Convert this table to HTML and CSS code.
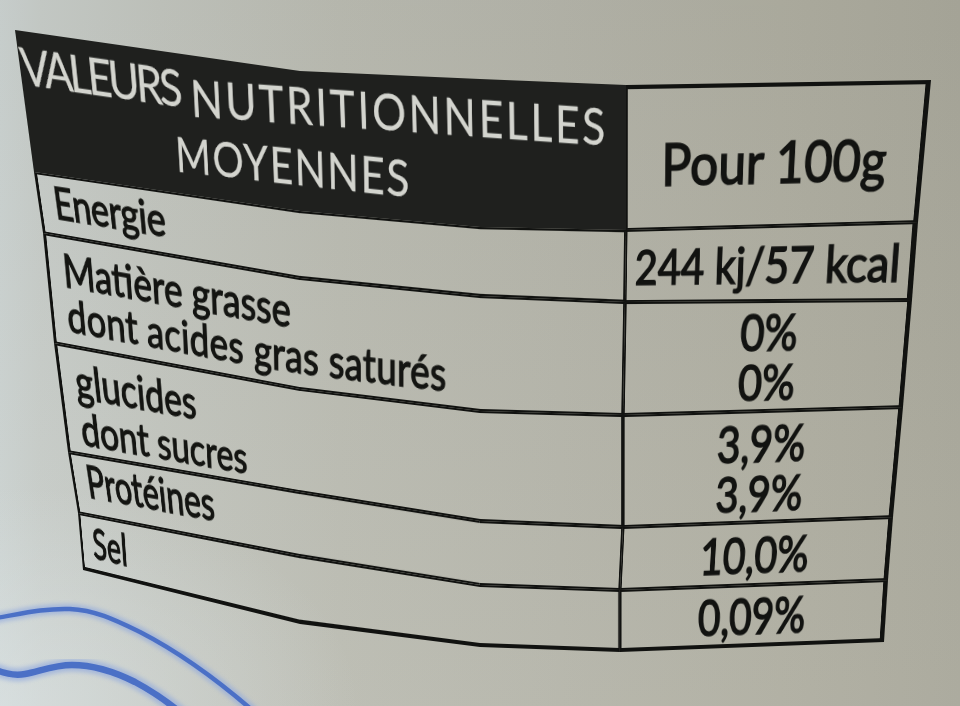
FILE: index.html
```html
<!DOCTYPE html>
<html lang="fr">
<head>
<meta charset="utf-8">
<title>Valeurs nutritionnelles moyennes</title>
<link rel="stylesheet" href="styles.css">
</head>
<body>
<main class="cup">
  <svg class="waves" viewBox="0 0 320 146" aria-hidden="true">
    <defs>
      <filter id="soft" x="-10%" y="-10%" width="120%" height="120%"><feGaussianBlur stdDeviation="2.2"/></filter>
      <filter id="softer" x="-10%" y="-10%" width="120%" height="120%"><feGaussianBlur stdDeviation="0.7"/></filter>
    </defs>
    <g fill="none" stroke-linecap="round">
      <path class="halo" filter="url(#soft)" d="M -4 58 C 20 54, 45 48, 70 49 C 95 50, 115 60, 140 72 C 175 90, 215 118, 252 150"/>
      <path class="halo thick" filter="url(#soft)" d="M -4 110 C 6 114, 14 116, 25 114 C 40 111, 55 105, 72 105 C 95 105, 115 112, 135 122 C 152 131, 168 142, 185 156"/>
      <path class="core" filter="url(#softer)" d="M -4 58 C 20 54, 45 48, 70 49 C 95 50, 115 60, 140 72 C 175 90, 215 118, 252 150"/>
      <path class="core thick" filter="url(#softer)" d="M -4 110 C 6 114, 14 116, 25 114 C 40 111, 55 105, 72 105 C 95 105, 115 112, 135 122 C 152 131, 168 142, 185 156"/>
    </g>
  </svg>

  <div class="label">
    <div class="names">
      <div class="seg dark r0 c0" data-cell="0 0"></div>
      <div class="seg dark r0 c1" data-cell="0 1"></div>
      <div class="seg dark r0 c2" data-cell="0 2"></div>
      <div class="seg r1 c0" data-cell="1 0"></div>
      <div class="seg r1 c1" data-cell="1 1"></div>
      <div class="seg r1 c2" data-cell="1 2"></div>
      <div class="seg r2 c0" data-cell="2 0"></div>
      <div class="seg r2 c1" data-cell="2 1"></div>
      <div class="seg r2 c2" data-cell="2 2"></div>
      <div class="seg r3 c0" data-cell="3 0"></div>
      <div class="seg r3 c1" data-cell="3 1"></div>
      <div class="seg r3 c2" data-cell="3 2"></div>
      <div class="seg r4 c0" data-cell="4 0"></div>
      <div class="seg r4 c1" data-cell="4 1"></div>
      <div class="seg r4 c2" data-cell="4 2"></div>
      <div class="seg r5 c0" data-cell="5 0"></div>
      <div class="seg r5 c1" data-cell="5 1"></div>
      <div class="seg r5 c2" data-cell="5 2"></div>

      <div class="txt title r0" data-row="0">
        <p class="first"><span class="w tight">VALEURS</span> <span class="w wide">NUTRITIONNELLES</span></p>
        <p class="second"><span class="w">MOYENNES</span></p>
      </div>
      <div class="txt energy r1" data-row="1">
        <p><span class="w">Energie</span></p>
      </div>
      <div class="txt fat r2" data-row="2">
        <p><span class="w">Matière</span> <span class="w">grasse</span></p>
        <p class="spread"><span class="w">dont</span> <span class="w">acides</span> <span class="w">gras</span> <span class="w">saturés</span></p>
      </div>
      <div class="txt carb r3" data-row="3">
        <p><span class="w">glucides</span></p>
        <p><span class="w">dont</span> <span class="w">sucres</span></p>
      </div>
      <div class="txt prot r4" data-row="4">
        <p><span class="w">Protéines</span></p>
      </div>
      <div class="txt salt r5" data-row="5">
        <p><span class="w">Sel</span></p>
      </div>
    </div>

    <div class="values">
      <div class="val v0" data-cell="0 3">Pour 100g</div>
      <div class="val v1" data-cell="1 3">244 kj/57 kcal</div>
      <div class="val v2" data-cell="2 3">0%<br>0%</div>
      <div class="val v3" data-cell="3 3">3,9%<br>3,9%</div>
      <div class="val v4" data-cell="4 3">10,0%</div>
      <div class="val v5" data-cell="5 3">0,09%</div>
    </div>
  </div>
</main>
<script src="script.js"></script>
</body>
</html>
```

FILE: styles.css
```css
* {
  box-sizing: border-box;
  margin: 0;
  padding: 0;
}

html,
body {
  width: 960px;
  height: 706px;
  overflow: hidden;
}

body {
  font-family: Lato, "Open Sans", "DejaVu Sans", sans-serif;
  color: #141512;
  background: #b9b9ae;
}

.cup {
  position: relative;
  width: 960px;
  height: 706px;
  overflow: hidden;
  background:
    radial-gradient(ellipse 360px 220px at 0% 100%, rgba(222, 230, 232, 0.55), rgba(222, 230, 232, 0) 100%),
    linear-gradient(180deg, rgba(0, 0, 0, 0.03), rgba(255, 255, 255, 0.04)),
    linear-gradient(90deg, #ccd3d1 0px, #c8cdc9 40px, #c2c5be 160px, #bbbcb2 340px, #b5b5aa 560px, #afaea1 780px, #a9a89b 960px);
}

.waves {
  position: absolute;
  left: 0;
  top: 560px;
  width: 320px;
  height: 146px;
}

.waves .halo {
  stroke: #8fa8de;
  stroke-width: 10;
  opacity: 0.65;
}

.waves .halo.thick {
  stroke-width: 13;
}

.waves .core {
  stroke: #4c70c6;
  stroke-width: 4.5;
}

.waves .core.thick {
  stroke-width: 6.5;
}

.label {
  display: flex;
  align-items: flex-start;
  filter: blur(0.35px);
}

/* left part of the table: frame segments + text layer */
.names {
  display: grid;
  flex: none;
  grid-template-columns: 330px 225px 160px;
  grid-template-rows: 142px 63px 111px 108px 62px 62px;
}

.r0 { grid-row: 1; }
.r1 { grid-row: 2; }
.r2 { grid-row: 3; }
.r3 { grid-row: 4; }
.r4 { grid-row: 5; }
.r5 { grid-row: 6; }
.c0 { grid-column: 1; }
.c1 { grid-column: 2; }
.c2 { grid-column: 3; }

.seg {
  border: 0 solid #111210;
  border-width: 2.4px 0;
  transform-origin: 0 0;
}

.seg.c0 {
  border-left-width: 4.5px;
}

.seg.c2 {
  border-right-width: 2.6px;
}

.seg.r5 {
  border-bottom-width: 4.5px;
}

.seg.dark {
  border-width: 0;
  background: #1f201e;
}

.txt {
  grid-column: 1 / -1;
  font-size: 46px;
  font-weight: 400;
  line-height: 46px;
  padding-left: 22px;
  white-space: nowrap;
  -webkit-text-stroke: 1.3px #141512;
}

.w {
  display: inline-block;
  transform-origin: 0 0;
}

.title {
  color: #d3d4ce;
  font-size: 50px;
  line-height: 59px;
  text-align: left;
  padding: 4px 0 0 1px;
  -webkit-text-stroke: 0.3px #d3d4ce;
}

.title .tight {
  letter-spacing: -4px;
  vertical-align: 8px;
}

.title .wide {
  letter-spacing: 3.2px;
}

.title .second {
  padding-left: 178px;
  letter-spacing: 2px;
}

.energy { padding-top: 5px; letter-spacing: -0.5px; }
.fat { padding-top: 10px; }
.fat .spread { letter-spacing: 0.4px; }
.carb { padding-top: 9px; line-height: 48px; }
.prot { padding-top: 3px; }
.salt { padding-top: 6px; }

/* right part of the table: values */
.values {
  display: flex;
  flex: none;
  flex-direction: column;
  width: 350px;
}

.val {
  display: flex;
  align-items: center;
  justify-content: center;
  text-align: center;
  white-space: nowrap;
  border: 0 solid #111210;
  border-width: 2.4px 6px 2.4px 2.6px;
  transform-origin: 0 0;
  font-size: 51px;
  font-weight: 400;
  line-height: 50px;
  color: #121311;
  -webkit-text-stroke: 1.6px #121311;
}

.v0 {
  height: 143px;
  border-top-width: 4.5px;
  font-size: 58px;
  padding-top: 8px;
}

.v1 {
  height: 75px;
}

.v2 { height: 110px; }
.v3 { height: 111px; }
.v4 { height: 63px; }

.v5 {
  height: 62px;
  border-bottom-width: 4.5px;
}
```

FILE: script.js
```js
(function () {
  // Measured corner points of the printed table on the photographed cup,
  // column by column (left border, two virtual splits, divider, right border),
  // one point per horizontal rule (top to bottom).
  var P = [
    [[15, 30], [34, 172], [43, 233], [54, 343], [68, 452], [78, 513], [83, 570]],
    [[300, 71], [300, 211], [300, 278], [300, 389], [300, 492], [300, 556], [300, 624]],
    [[480, 79], [480, 227], [480, 296], [480, 411], [480, 521], [480, 585], [480, 647]],
    [[626, 85], [626, 230], [625, 302], [623, 415], [623, 527], [620, 590], [620, 652]],
    [[931, 80], [918, 222], [912, 300], [903, 407], [893, 517], [888, 580], [884, 642]]
  ];

  function adj(m) {
    return [
      m[4] * m[8] - m[5] * m[7], m[2] * m[7] - m[1] * m[8], m[1] * m[5] - m[2] * m[4],
      m[5] * m[6] - m[3] * m[8], m[0] * m[8] - m[2] * m[6], m[2] * m[3] - m[0] * m[5],
      m[3] * m[7] - m[4] * m[6], m[1] * m[6] - m[0] * m[7], m[0] * m[4] - m[1] * m[3]
    ];
  }
  function multmm(a, b) {
    var c = [];
    for (var i = 0; i < 3; i++) {
      for (var j = 0; j < 3; j++) {
        var s = 0;
        for (var k = 0; k < 3; k++) s += a[3 * i + k] * b[3 * k + j];
        c[3 * i + j] = s;
      }
    }
    return c;
  }
  function multmv(m, v) {
    return [
      m[0] * v[0] + m[1] * v[1] + m[2] * v[2],
      m[3] * v[0] + m[4] * v[1] + m[5] * v[2],
      m[6] * v[0] + m[7] * v[1] + m[8] * v[2]
    ];
  }
  function basis(p) {
    var m = [p[0][0], p[1][0], p[2][0], p[0][1], p[1][1], p[2][1], 1, 1, 1];
    var v = multmv(adj(m), [p[3][0], p[3][1], 1]);
    return multmm(m, [v[0], 0, 0, 0, v[1], 0, 0, 0, v[2]]);
  }
  function proj(src, dst) {
    var t = multmm(basis(dst), adj(basis(src)));
    var n = t[8];
    return t.map(function (v) { return v / n; });
  }
  function apply(t, p) {
    var x = t[0] * p[0] + t[1] * p[1] + t[2];
    var y = t[3] * p[0] + t[4] * p[1] + t[5];
    var w = t[6] * p[0] + t[7] * p[1] + t[8];
    return [x / w, y / w];
  }
  function css(t) {
    return 'matrix3d(' + [t[0], t[3], 0, t[6], t[1], t[4], 0, t[7], 0, 0, 1, 0, t[2], t[5], 0, t[8]].join(',') + ')';
  }
  function corners(r) {
    return [[r.left, r.top], [r.right, r.top], [r.right, r.bottom], [r.left, r.bottom]];
  }
  function shift(pts, r) {
    return pts.map(function (p) { return [p[0] - r.left, p[1] - r.top]; });
  }
  function quad(row, col) {
    return [P[col][row], P[col + 1][row], P[col + 1][row + 1], P[col][row + 1]];
  }

  var cells = [].slice.call(document.querySelectorAll('[data-cell]'));
  var words = [].slice.call(document.querySelectorAll('[data-row] .w'));
  var cellRects = cells.map(function (el) { return el.getBoundingClientRect(); });
  var wordRects = words.map(function (el) { return el.getBoundingClientRect(); });
  var maps = {};

  cells.forEach(function (el, i) {
    var rc = el.getAttribute('data-cell').split(' ').map(Number);
    var r = cellRects[i];
    var q = quad(rc[0], rc[1]);
    maps[rc[0] + ' ' + rc[1]] = { t: proj(corners(r), q), rect: r };
    el.style.transform = css(proj(shift(corners(r), r), shift(q, r)));
  });

  words.forEach(function (el, i) {
    var row = el.closest('[data-row]').getAttribute('data-row');
    var r = wordRects[i];
    var real = corners(r).map(function (p) {
      var c = 0;
      while (c < 2 && p[0] >= maps[row + ' ' + c].rect.right) c++;
      return apply(maps[row + ' ' + c].t, p);
    });
    el.style.transform = css(proj(shift(corners(r), r), shift(real, r)));
  });
})();
```
